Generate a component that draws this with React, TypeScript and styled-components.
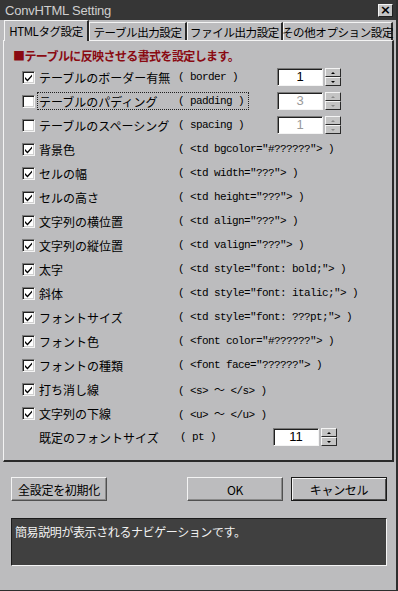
import React from 'react';
import styled, { createGlobalStyle } from 'styled-components';

const GlobalStyle = createGlobalStyle`
  body {
    margin: 0;
    background: #bcbcbe;
    font-family: 'Noto Sans CJK JP', 'Noto Sans', sans-serif;
  }
`;

interface OptionRow {
  label: string;
  code: string;
  checked: boolean;
  spin?: { value: string; disabled: boolean };
  focused?: boolean;
}

const rows: OptionRow[] = [
  { label: 'テーブルのボーダー有無', code: '( border )', checked: true, spin: { value: '1', disabled: false } },
  { label: 'テーブルのパディング', code: '( padding )', checked: false, spin: { value: '3', disabled: true }, focused: true },
  { label: 'テーブルのスペーシング', code: '( spacing )', checked: false, spin: { value: '1', disabled: true } },
  { label: '背景色', code: '( <td bgcolor="#??????"> )', checked: true },
  { label: 'セルの幅', code: '( <td width="???"> )', checked: true },
  { label: 'セルの高さ', code: '( <td height="???"> )', checked: true },
  { label: '文字列の横位置', code: '( <td align="???"> )', checked: true },
  { label: '文字列の縦位置', code: '( <td valign="???"> )', checked: true },
  { label: '太字', code: '( <td style="font: bold;"> )', checked: true },
  { label: '斜体', code: '( <td style="font: italic;"> )', checked: true },
  { label: 'フォントサイズ', code: '( <td style="font: ???pt;"> )', checked: true },
  { label: 'フォント色', code: '( <font color="#??????"> )', checked: true },
  { label: 'フォントの種類', code: '( <font face="??????"> )', checked: true },
  { label: '打ち消し線', code: '( <s> ～ </s> )', checked: true },
  { label: '文字列の下線', code: '( <u> ～ </u> )', checked: true },
];

const tabs = [
  { label: 'HTMLタグ設定', width: 85, active: true },
  { label: 'テーブル出力設定', width: 98, active: false },
  { label: 'ファイル出力設定', width: 96, active: false },
  { label: 'その他オプション設定', width: 110, active: false },
];

const Spinner: React.FC<{ value: string; disabled?: boolean; shift?: number }> = ({
  value,
  disabled = false,
  shift = 0,
}) => (
  <SpinWrap $shift={shift}>
    <SpinInput $disabled={disabled}>{value}</SpinInput>
    <SpinArrows>
      <SpinHalf>
        <Arrow $up $disabled={disabled} />
      </SpinHalf>
      <SpinHalf>
        <Arrow $disabled={disabled} />
      </SpinHalf>
    </SpinArrows>
  </SpinWrap>
);

const App: React.FC = () => {
  return (
    <>
      <GlobalStyle />
      <Window>
        <TitleBar>
          <TitleText>ConvHTML Setting</TitleText>
          <CloseButton>×</CloseButton>
        </TitleBar>
        <TabRow>
          {tabs.map((t) => (
            <Tab key={t.label} $active={t.active} $width={t.width}>
              {t.label}
            </Tab>
          ))}
        </TabRow>
        <Panel>
          <Heading>■テーブルに反映させる書式を設定します。</Heading>
          {rows.map((r) => (
            <Row key={r.label}>
              <CheckBox>
                {r.checked && (
                  <CheckMark viewBox="0 0 9 9">
                    <path d="M1 4 L3.5 6.5 L8 1.5 L8 3.5 L3.5 8.5 L1 6 Z" />
                  </CheckMark>
                )}
              </CheckBox>
              <LabelArea $focused={r.focused}>
                <Label>{r.label}</Label>
                <Code>{r.code}</Code>
              </LabelArea>
              {r.spin && <Spinner value={r.spin.value} disabled={r.spin.disabled} />}
            </Row>
          ))}
          <Row>
            <PlainLabel>既定のフォントサイズ</PlainLabel>
            <Code>( pt )</Code>
            <Spinner value="11" shift={4} />
          </Row>
        </Panel>
        <ButtonRow>
          <Button>全設定を初期化</Button>
          <Spacer />
          <Button>OK</Button>
          <Button $default>キャンセル</Button>
        </ButtonRow>
        <NavBox>簡易説明が表示されるナビゲーションです。</NavBox>
      </Window>
    </>
  );
};

const Window = styled.div`
  width: 398px;
  height: 591px;
  box-sizing: border-box;
  background: #bcbcbe;
  border-right: 2px solid #2e2e2e;
  border-bottom: 1px solid #2e2e2e;
  display: flex;
  flex-direction: column;
`;

const TitleBar = styled.div`
  height: 20px;
  background: #363636;
  display: flex;
  align-items: center;
  justify-content: space-between;
  padding: 0 3px 0 5px;
`;

const TitleText = styled.span`
  font-family: 'Liberation Sans', Arial, sans-serif;
  font-size: 13px;
  color: #cfcfcf;
  letter-spacing: -0.2px;
`;

const CloseButton = styled.div`
  width: 15px;
  height: 13px;
  box-sizing: border-box;
  background: #c4c4c4;
  border: 1px solid;
  border-color: #f4f4f4 #202020 #202020 #f4f4f4;
  font-family: 'DejaVu Sans', sans-serif;
  font-weight: bold;
  font-size: 13px;
  line-height: 10px;
  text-align: center;
  color: #000;
`;

const TabRow = styled.div`
  height: 20px;
  display: flex;
  align-items: flex-end;
  padding-left: 4px;
  position: relative;
  z-index: 1;
`;

const Tab = styled.div<{ $active: boolean; $width: number }>`
  width: ${(p) => p.$width}px;
  height: ${(p) => (p.$active ? 21 : 18)}px;
  margin-bottom: ${(p) => (p.$active ? -1 : 0)}px;
  box-sizing: border-box;
  background: #bcbcbe;
  border-top: 1px solid #f4f4f4;
  border-left: 1px solid #f4f4f4;
  border-right: 2px solid #2a2a2a;
  font-size: 11.5px;
  color: #000;
  display: flex;
  align-items: center;
  justify-content: center;
  white-space: nowrap;
  letter-spacing: -0.4px;
`;

const Panel = styled.div`
  margin: 0 2px 0 3px;
  height: 422px;
  box-sizing: border-box;
  border-top: 1px solid #f4f4f4;
  border-left: 1px solid #f4f4f4;
  border-right: 2px solid #2a2a2a;
  border-bottom: 2px solid #2a2a2a;
  padding: 7px 51px 0 18px;
  display: flex;
  flex-direction: column;
`;

const Heading = styled.div`
  height: 16px;
  margin-left: -9px;
  margin-bottom: 1px;
  font-size: 12px;
  font-weight: bold;
  color: #8a0a12;
  letter-spacing: -0.6px;
  line-height: 16px;
`;

const Row = styled.div`
  height: 24px;
  display: flex;
  align-items: center;
`;

const CheckBox = styled.div`
  width: 13px;
  height: 13px;
  box-sizing: border-box;
  background: #fff;
  border: 1px solid;
  border-color: #7a7a7a #f4f4f4 #f4f4f4 #7a7a7a;
  box-shadow: inset 1px 1px 0 #202020, inset -1px -1px 0 #d0d0d0;
  display: flex;
  align-items: center;
  justify-content: center;
  flex-shrink: 0;
`;

const CheckMark = styled.svg`
  width: 9px;
  height: 9px;
  fill: #000;
`;

const LabelArea = styled.div<{ $focused?: boolean }>`
  display: flex;
  align-items: center;
  height: 18px;
  margin-left: 2px;
  padding-left: 1px;
  padding-right: 4px;
  box-sizing: border-box;
  border: 1px dotted ${(p) => (p.$focused ? '#202020' : 'transparent')};
`;

const Label = styled.span`
  width: 139px;
  font-size: 12px;
  color: #000;
  white-space: nowrap;
`;

const PlainLabel = styled.span`
  width: 141px;
  margin-left: 17px;
  font-size: 12px;
  color: #000;
  white-space: nowrap;
`;

const Code = styled.span`
  font-family: 'Liberation Mono', 'Noto Sans CJK JP', monospace;
  font-size: 11px;
  letter-spacing: -0.6px;
  color: #000;
  white-space: pre;
`;

const SpinWrap = styled.div<{ $shift: number }>`
  display: flex;
  align-items: center;
  margin-left: auto;
  margin-right: ${(p) => p.$shift}px;
`;

const SpinInput = styled.div<{ $disabled: boolean }>`
  width: 46px;
  height: 18px;
  box-sizing: border-box;
  background: #fff;
  border: 1px solid;
  border-color: #7a7a7a #f4f4f4 #f4f4f4 #7a7a7a;
  box-shadow: inset 1px 1px 0 #202020;
  font-family: 'Liberation Sans', sans-serif;
  font-size: 13px;
  line-height: 16px;
  text-align: center;
  color: ${(p) => (p.$disabled ? '#9a9a9a' : '#000')};
`;

const SpinArrows = styled.div`
  margin-left: 2px;
  display: flex;
  flex-direction: column;
`;

const SpinHalf = styled.div`
  width: 16px;
  height: 9px;
  box-sizing: border-box;
  background: #c4c4c4;
  border: 1px solid;
  border-color: #f4f4f4 #2a2a2a #2a2a2a #f4f4f4;
  display: flex;
  align-items: center;
  justify-content: center;
`;

const Arrow = styled.div<{ $up?: boolean; $disabled: boolean }>`
  width: 0;
  height: 0;
  border-left: 2px solid transparent;
  border-right: 2px solid transparent;
  ${(p) =>
    p.$up
      ? `border-bottom: 2px solid ${p.$disabled ? '#8a8a8a' : '#000'};`
      : `border-top: 2px solid ${p.$disabled ? '#8a8a8a' : '#000'};`}
`;

const ButtonRow = styled.div`
  display: flex;
  gap: 8px;
  padding: 15px 0 0 11px;
  height: 24px;
`;

const Spacer = styled.div`
  width: 64px;
`;

const Button = styled.div<{ $default?: boolean }>`
  width: 96px;
  height: 24px;
  box-sizing: border-box;
  background: #bcbcbe;
  border: 1px solid;
  border-color: ${(p) => (p.$default ? '#1a1a1a' : '#f4f4f4 #505050 #505050 #f4f4f4')};
  box-shadow: ${(p) =>
    p.$default ? 'inset 1px 1px 0 #f4f4f4, inset -1px -1px 0 #505050' : 'inset -1px -1px 0 #8a8a8a'};
  font-size: 12px;
  color: #000;
  display: flex;
  align-items: center;
  justify-content: center;
  letter-spacing: -0.3px;
`;

const NavBox = styled.div`
  margin: 17px 9px 0 11px;
  height: 48px;
  box-sizing: border-box;
  background: #404040;
  border: 1px solid;
  border-color: #1a1a1a #f4f4f4 #f4f4f4 #1a1a1a;
  padding: 4px 3px;
  font-size: 12px;
  color: #f2f2f2;
  letter-spacing: -0.4px;
`;

export default App;
